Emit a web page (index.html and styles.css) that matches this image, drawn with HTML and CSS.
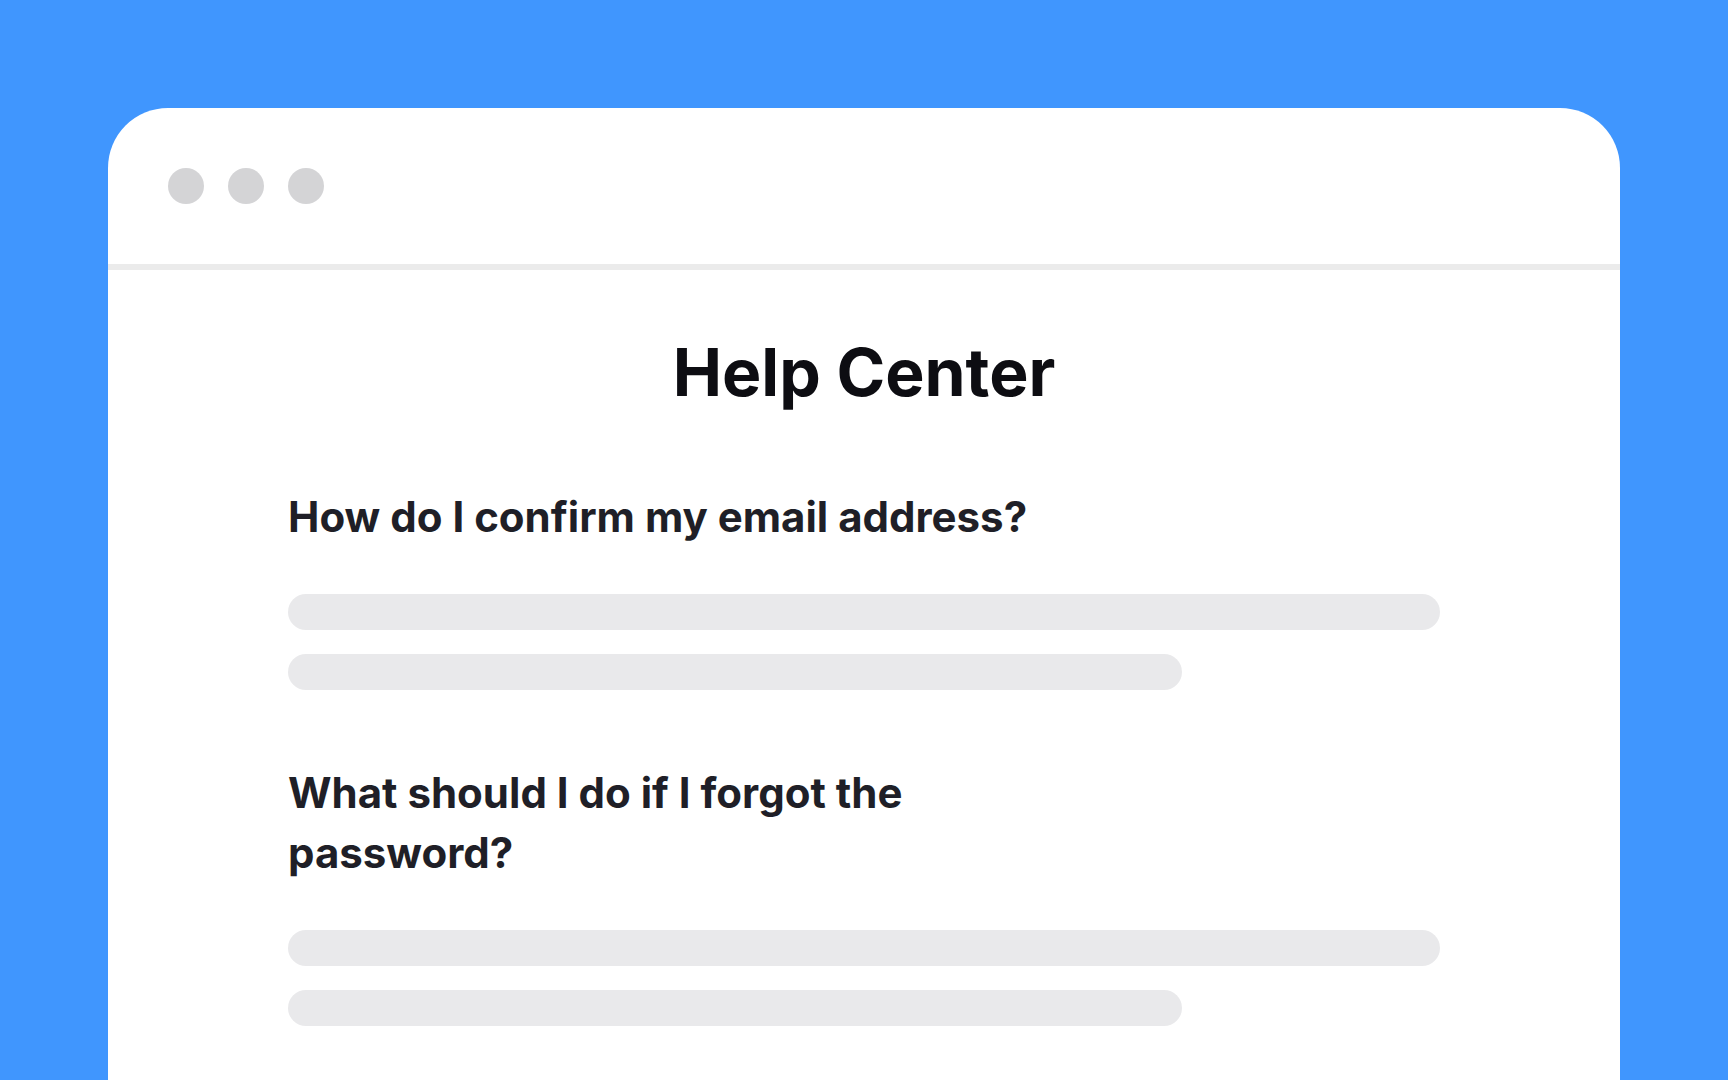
FILE: index.html
```html
<!DOCTYPE html>
<html lang="en">
<head>
<meta charset="utf-8">
<title>Help Center</title>
<link rel="stylesheet" href="styles.css">
</head>
<body>
<div class="window">
  <div class="titlebar">
    <span class="dot"></span>
    <span class="dot"></span>
    <span class="dot"></span>
  </div>
  <main class="content">
    <h1 class="page-title">Help Center</h1>
    <section class="faq">
      <h2 class="question">How do I confirm my email address?</h2>
      <div class="lines">
        <div class="line line-full"></div>
        <div class="line line-short"></div>
      </div>
    </section>
    <section class="faq">
      <h2 class="question">What should I do if I forgot the password?</h2>
      <div class="lines">
        <div class="line line-full"></div>
        <div class="line line-short"></div>
      </div>
    </section>
  </main>
</div>
</body>
</html>
```
FILE: styles.css
```css
html, body {
  margin: 0;
  padding: 0;
  height: 100%;
  overflow: hidden;
}

body {
  background: #4096fe;
  font-family: Inter, "Noto Sans", "Liberation Sans", sans-serif;
  padding: 108px 108px 0;
  box-sizing: border-box;
}

.window {
  background: #ffffff;
  border-radius: 60px 60px 0 0;
  min-height: 1100px;
}

.titlebar {
  height: 156px;
  display: flex;
  align-items: center;
  gap: 24px;
  padding: 0 60px;
  border-bottom: 6px solid #ebebeb;
}

.dot {
  width: 36px;
  height: 36px;
  border-radius: 50%;
  background: #d4d4d6;
}

.content {
  padding: 62px 180px 0;
}

.page-title {
  margin: 0;
  text-align: center;
  font-size: 66px;
  line-height: 80px;
  font-weight: 700;
  color: #0d0d12;
}

.faq {
  display: flex;
  flex-direction: column;
  gap: 47px;
}

.page-title + .faq {
  margin-top: 75px;
}

.faq + .faq {
  margin-top: 73px;
}

.question {
  margin: 0;
  max-width: 760px;
  font-size: 42px;
  line-height: 60px;
  font-weight: 700;
  color: #1f1f27;
}

.lines {
  display: flex;
  flex-direction: column;
  gap: 24px;
}

.line {
  height: 36px;
  border-radius: 18px;
  background: #e9e9eb;
}

.line-full {
  width: 100%;
}

.line-short {
  width: 894px;
}
```
